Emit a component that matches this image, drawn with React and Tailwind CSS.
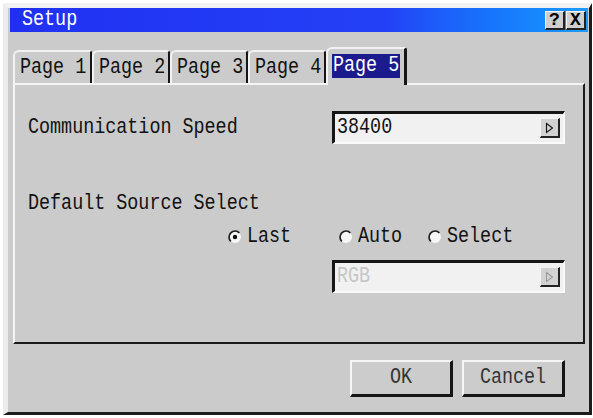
import React from 'react';

const FONT = { fontFamily: '"Liberation Mono", "DejaVu Sans Mono", monospace' };

const tabs = ['Page 1', 'Page 2', 'Page 3', 'Page 4'];
const tabWidths = ['w-[79px]', 'w-[78px]', 'w-[78px]', 'w-[78px]'];

// the projector font is tall and narrow, so stretch glyphs vertically
const Txt = ({ children, className = '' }) => (
  <span className={`inline-block scale-y-[1.2] whitespace-pre ${className}`}>{children}</span>
);

const ArrowButton = ({ disabled }) => (
  <div className="w-[20px] h-[20px] bg-[#d2d2d2] border-t border-l border-t-[#f4f4f4] border-l-[#f4f4f4] border-r-2 border-b-2 border-r-[#222] border-b-[#222] flex items-center justify-center">
    <svg width="9" height="12" viewBox="0 0 9 12">
      <path d="M1.5 1.5 L7.5 6 L1.5 10.5 Z" fill="none" stroke={disabled ? '#9a9a9a' : '#111'} strokeWidth="1.1" />
    </svg>
  </div>
);

const Dropdown = ({ value, disabled }) => (
  <div className="w-[233px] h-[33px] bg-[#f1f1f1] border-t-[3px] border-l-[3px] border-t-[#151515] border-l-[#151515] border-r-2 border-b-2 border-r-[#fafafa] border-b-[#fafafa] flex items-center justify-between pl-[2px] pr-[3px]">
    <Txt className={disabled ? 'text-[#c6c6c6]' : 'text-[#111]'}>{value}</Txt>
    <ArrowButton disabled={disabled} />
  </div>
);

const Radio = ({ checked }) => (
  <svg width="14" height="14" viewBox="0 0 14 14" className="shrink-0">
    <circle cx="7" cy="7" r="6" fill="#f6f6f6" />
    <path d="M2.8 11.4 A6 6 0 0 1 11.4 2.8" fill="none" stroke="#202020" strokeWidth="1.7" />
    {checked && <circle cx="7" cy="7" r="2.2" fill="#111" />}
  </svg>
);

const TitleButton = ({ children }) => (
  <div className="w-[20px] h-[19px] bg-[#cfcfcf] border-t border-l border-t-[#f6f6f6] border-l-[#f6f6f6] border-r-2 border-b-2 border-r-[#222] border-b-[#222] flex items-center justify-center text-[18px] font-bold text-black leading-none">
    {children}
  </div>
);

const PushButton = ({ label }) => (
  <div className="w-[103px] h-[37px] bg-[#cccccc] border-t-2 border-l-2 border-t-[#f6f6f6] border-l-[#f6f6f6] border-r-[3px] border-b-[3px] border-r-[#151515] border-b-[#151515] flex items-center justify-center text-[#333]">
    <Txt>{label}</Txt>
  </div>
);

export default function App() {
  return (
    <div className="w-[593px] h-[418px] bg-white pt-[3px] pl-[3px] overflow-hidden" style={FONT}>
      <div className="w-[589px] h-[412px] bg-[#cbcbcb] border-l-[5px] border-t-[5px] border-l-[#ececec] border-t-[#f2f2f2] border-r-[3px] border-b-[3px] border-r-[#1c1c1c] border-b-[#1c1c1c] flex flex-col text-[18.4px] leading-[20px]">
        {/* title bar */}
        <div className="h-[24px] ml-[2px] mr-[1px] bg-linear-to-r from-[#2030f2] via-[#2440f6] via-65% to-[#1d9cff] flex items-center justify-between pl-[12px] pr-[2px]">
          <Txt className="text-white">Setup</Txt>
          <div className="flex gap-[1px]">
            <TitleButton>?</TitleButton>
            <TitleButton>X</TitleButton>
          </div>
        </div>

        {/* tabs */}
        <div className="mt-[15px] h-[36px] ml-[5px] flex items-end">
          {tabs.map((t, i) => (
            <div
              key={t}
              className={`${tabWidths[i]} h-[33px] border-t-2 border-l-2 border-t-[#f2f2f2] border-l-[#f2f2f2] border-r-2 border-r-[#151515] rounded-tl-[6px] rounded-tr-[3px] flex items-center pl-[5px] text-[#111]`}
            >
              <Txt>{t}</Txt>
            </div>
          ))}
          <div className="relative z-10 w-[81px] h-[38px] -mb-[2px] bg-[#cbcbcb] border-t-2 border-l-2 border-t-[#f2f2f2] border-l-[#f2f2f2] border-r-[3px] border-r-[#151515] rounded-tl-[6px] rounded-tr-[3px] flex items-start pt-[5px] pl-[4px]">
            <span className="bg-[#1b1b8e] text-white px-[1px] h-[24px] flex items-center">
              <Txt>Page 5</Txt>
            </span>
          </div>
        </div>

        {/* page body */}
        <div className="ml-[5px] mr-[4px] h-[261px] border-t-2 border-l-2 border-t-[#f4f4f4] border-l-[#f4f4f4] border-r-2 border-b-2 border-r-[#1a1a1a] border-b-[#1a1a1a] flex flex-col pl-[13px] pr-[18px] text-[#111]">
          <div className="mt-[26px] flex items-center justify-between">
            <Txt>Communication Speed</Txt>
            <Dropdown value="38400" />
          </div>

          <div className="mt-[50px] h-[20px]">
            <Txt>Default Source Select</Txt>
          </div>

          <div className="mt-[13px] h-[20px] flex items-center pl-[200px]">
            <div className="w-[111px] flex items-center gap-[5px]">
              <Radio checked />
              <Txt>Last</Txt>
            </div>
            <div className="w-[89px] flex items-center gap-[5px]">
              <Radio />
              <Txt>Auto</Txt>
            </div>
            <div className="flex items-center gap-[5px]">
              <Radio />
              <Txt>Select</Txt>
            </div>
          </div>

          <div className="mt-[13px] flex justify-end">
            <Dropdown value="RGB" disabled />
          </div>
        </div>

        {/* dialog buttons */}
        <div className="mt-[16px] flex justify-end gap-[9px] mr-[24px]">
          <PushButton label="OK" />
          <PushButton label="Cancel" />
        </div>
      </div>
    </div>
  );
}
